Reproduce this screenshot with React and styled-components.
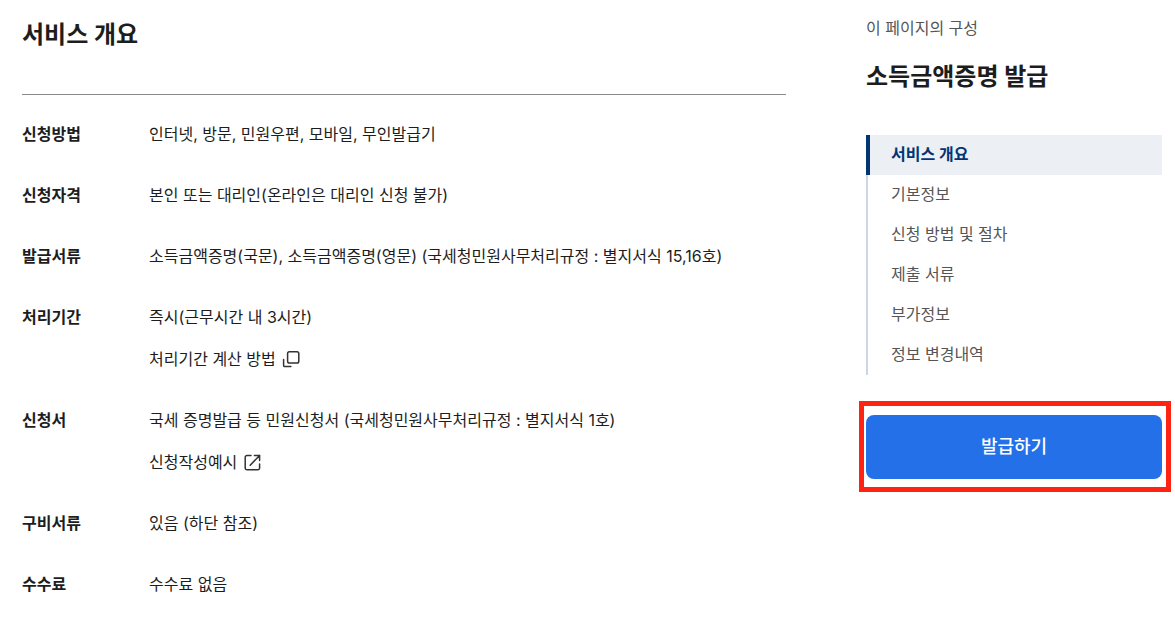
import React from 'react';
import styled, { createGlobalStyle } from 'styled-components';

const GlobalStyle = createGlobalStyle`
  *, *::before, *::after { box-sizing: border-box; }
  body {
    margin: 0;
    background: #fff;
    color: #1d1d1d;
    font-family: Inter, "Noto Sans CJK KR", sans-serif;
    font-size: 16px;
    line-height: 25px;
  }
`;

const Page = styled.div`
  display: grid;
  grid-template-columns: minmax(0, 1fr) 296px;
  gap: 80px;
  padding: 16px 13px 24px 22px;
`;

const Title = styled.h2`
  margin: 0;
  font-size: 24px;
  font-weight: 700;
  line-height: 38px;
`;

const Details = styled.dl`
  display: grid;
  gap: 36px;
  margin: 40px 0 0;
  padding-top: 27px;
  border-top: 1px solid #8a8a8a;
`;

const DetailRow = styled.div`
  display: grid;
  grid-template-columns: 127px minmax(0, 1fr);
`;

const Term = styled.dt`
  font-weight: 700;
`;

const Description = styled.dd`
  display: flex;
  flex-direction: column;
  align-items: flex-start;
  gap: 17px;
  margin: 0;
`;

const GuideLink = styled.a`
  display: inline-flex;
  align-items: center;
  gap: 6px;
  color: inherit;
  text-decoration: none;
`;

const Icon = styled.svg`
  width: 20px;
  height: 20px;
  margin-top: -2px;
  fill: none;
  stroke: #333;
  stroke-width: 1.5;
  stroke-linecap: round;
  stroke-linejoin: round;
`;

const Sidebar = styled.aside`
  color: #555;
`;

const SidebarTitle = styled(Title)`
  margin: 17px 0 39px;
  color: #1d1d1d;
`;

const NavList = styled.ul`
  margin: 0;
  padding: 0;
  list-style: none;
`;

const NavLink = styled.a`
  display: block;
  padding: 7px 0 8px ${p => (p.$active ? '21px' : '23px')};
  border-left: ${p => (p.$active ? '4px solid #003675' : '2px solid #cdd7e4')};
  background: ${p => (p.$active ? '#ecf0f5' : 'transparent')};
  color: ${p => (p.$active ? '#003675' : 'inherit')};
  font-weight: ${p => (p.$active ? 700 : 400)};
  text-decoration: none;
`;

const Action = styled.div`
  position: relative;
  margin-top: 40px;

  &::after {
    content: '';
    position: absolute;
    inset: -14px -9px -13px -7px;
    border: 5px solid #ff2314;
    pointer-events: none;
  }
`;

const IssueButton = styled.button`
  display: block;
  width: 100%;
  height: 64px;
  padding: 0 16px 4px;
  border: 0;
  border-radius: 8px;
  background: #2370e8;
  color: #fff;
  font-family: inherit;
  font-size: 18px;
  font-weight: 500;
  cursor: pointer;
`;

const PopupIcon = () => (
  <Icon viewBox="0 0 20 20" aria-hidden="true">
    <rect x="5.6" y="2.8" width="11.2" height="11.2" rx="1.8" />
    <path d="M1.6 10.4v6.1a1 1 0 0 0 1 1h6.3" />
  </Icon>
);

const ExternalIcon = () => (
  <Icon viewBox="0 0 20 20" aria-hidden="true">
    <path d="M8 3.4H4a1.8 1.8 0 0 0-1.8 1.8v10.8a1.8 1.8 0 0 0 1.8 1.8h10.8a1.8 1.8 0 0 0 1.8-1.8V12" />
    <path d="M11.4 3.4h5.2v5.2M16.6 3.4l-9.4 9.8" />
  </Icon>
);

const details = [
  { term: '신청방법', text: '인터넷, 방문, 민원우편, 모바일, 무인발급기' },
  { term: '신청자격', text: '본인 또는 대리인(온라인은 대리인 신청 불가)' },
  { term: '발급서류', text: '소득금액증명(국문), 소득금액증명(영문) (국세청민원사무처리규정 : 별지서식 15,16호)' },
  { term: '처리기간', text: '즉시(근무시간 내 3시간)', link: '처리기간 계산 방법', icon: <PopupIcon /> },
  { term: '신청서', text: '국세 증명발급 등 민원신청서 (국세청민원사무처리규정 : 별지서식 1호)', link: '신청작성예시', icon: <ExternalIcon /> },
  { term: '구비서류', text: '있음 (하단 참조)' },
  { term: '수수료', text: '수수료 없음' },
];

const sections = ['서비스 개요', '기본정보', '신청 방법 및 절차', '제출 서류', '부가정보', '정보 변경내역'];

export default function App() {
  return (
    <>
      <GlobalStyle />
      <Page>
        <main>
          <Title>서비스 개요</Title>
          <Details>
            {details.map(({ term, text, link, icon }) => (
              <DetailRow key={term}>
                <Term>{term}</Term>
                <Description>
                  <span>{text}</span>
                  {link && <GuideLink href="#">{link}{icon}</GuideLink>}
                </Description>
              </DetailRow>
            ))}
          </Details>
        </main>
        <Sidebar>
          <div>이 페이지의 구성</div>
          <SidebarTitle>소득금액증명 발급</SidebarTitle>
          <nav aria-label="이 페이지의 구성">
            <NavList>
              {sections.map((name, i) => (
                <li key={name}>
                  <NavLink href="#" $active={i === 0} aria-current={i === 0 ? 'true' : undefined}>{name}</NavLink>
                </li>
              ))}
            </NavList>
          </nav>
          <Action>
            <IssueButton type="button">발급하기</IssueButton>
          </Action>
        </Sidebar>
      </Page>
    </>
  );
}
